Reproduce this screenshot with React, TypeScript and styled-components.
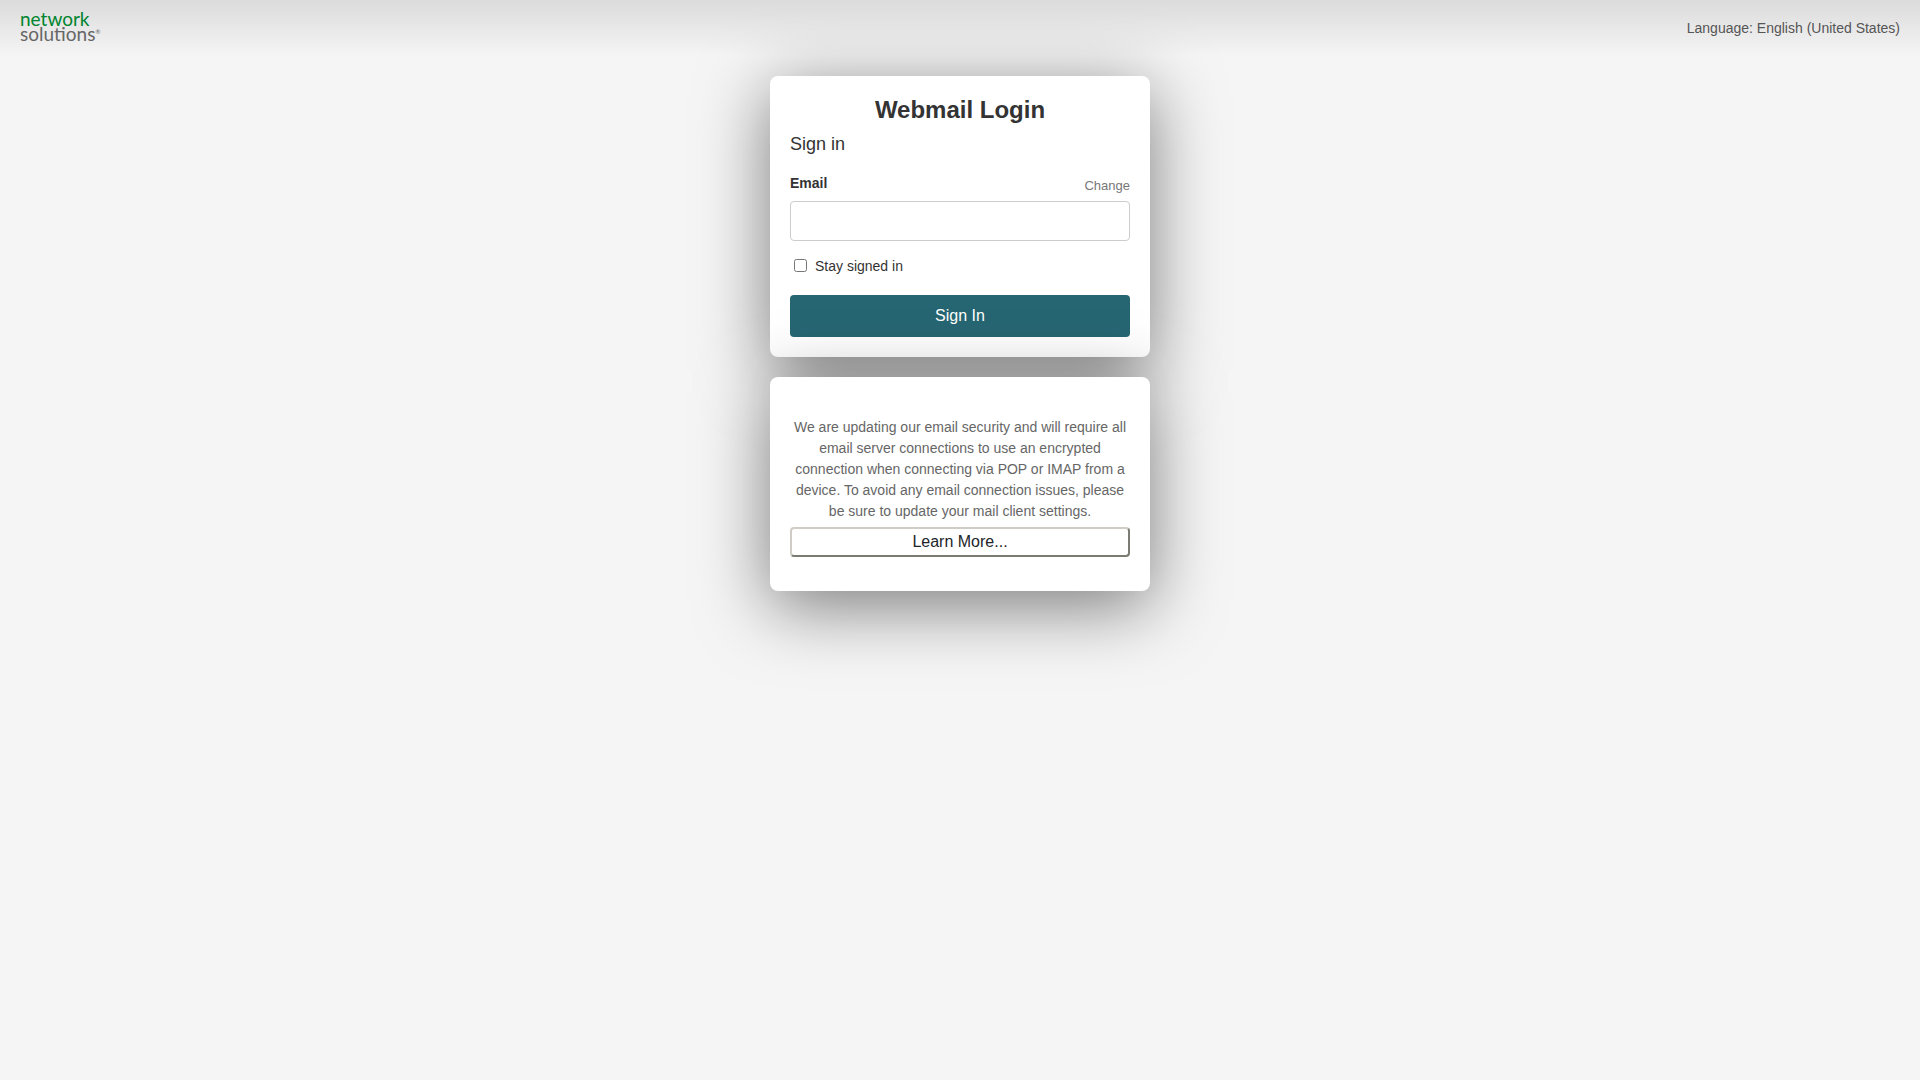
import React, { useState } from "react";
import styled, { createGlobalStyle } from "styled-components";

const GlobalStyle = createGlobalStyle`
  *, *::before, *::after { box-sizing: border-box; }
  body {
    margin: 0;
    background: #f5f5f5;
    color: #333;
    font: 14px/21px "Liberation Sans", Arial, sans-serif;
  }
`;

const Page = styled.div`
  min-height: 100vh;
`;

const Header = styled.header`
  display: flex;
  justify-content: space-between;
  align-items: center;
  height: 56px;
  padding: 0 20px;
  background: linear-gradient(#dbdbdb, #f5f5f5);
`;

const Logo = styled.a`
  display: flex;
  flex-direction: column;
  padding-bottom: 4px;
  color: #666;
  font: 19px/15px Lato, "Noto Sans", sans-serif;
  text-decoration: none;
`;

const LogoTop = styled.span`
  color: #00852f;
`;

const Registered = styled.sup`
  font-size: 6px;
  line-height: 6px;
`;

const LanguageButton = styled.button`
  padding: 0;
  border: 0;
  background: none;
  color: #555;
  font: inherit;
  cursor: pointer;
`;

const Main = styled.main`
  display: flex;
  flex-direction: column;
  gap: 20px;
  width: 100%;
  max-width: 380px;
  margin: 20px auto;
`;

const Card = styled.section`
  padding: 20px;
  border-radius: 8px;
  background: #fff;
  box-shadow: 0 15px 70px rgba(0, 0, 0, 0.5);
`;

const NoticeCard = styled(Card)`
  padding: 40px 20px 34px;
`;

const Title = styled.h1`
  margin: 0 0 8px;
  font-size: 24px;
  line-height: 28px;
  text-align: center;
`;

const Subtitle = styled.h2`
  margin: 0 0 17px;
  font-size: 18px;
  font-weight: 400;
  line-height: 24px;
`;

const FieldHead = styled.div`
  display: flex;
  justify-content: space-between;
  align-items: flex-end;
  height: 23px;
  margin-bottom: 5px;
`;

const Label = styled.label`
  align-self: flex-start;
  font-weight: 700;
`;

const ChangeLink = styled.a`
  color: #777;
  font-size: 13px;
  text-decoration: none;
`;

const TextInput = styled.input`
  display: block;
  width: 100%;
  height: 40px;
  padding: 8px 12px;
  border: 1px solid #ccc;
  border-radius: 4px;
  background: #fff;
  font: inherit;
`;

const CheckRow = styled.label`
  display: flex;
  align-items: flex-start;
  gap: 8px;
  margin: 15px 0 18px;
`;

const Checkbox = styled.input`
  width: 13px;
  height: 13px;
  margin: 3px 0 0 4px;
`;

const SubmitButton = styled.button`
  display: block;
  width: 100%;
  height: 42px;
  padding: 0 12px 2px;
  border: 0;
  border-radius: 4px;
  background: #266672;
  color: #fff;
  font: inherit;
  font-size: 16px;
  cursor: pointer;
`;

const Notice = styled.p`
  margin: 0 0 5px;
  color: #666;
  text-align: center;
`;

const LearnButton = styled.button`
  display: block;
  width: 100%;
  padding: 1px 6px;
  border: 2px solid;
  border-color: #d0ccc6 #7c7c74 #7c7c74 #d0ccc6;
  border-radius: 4px;
  background: #fff;
  color: #212529;
  font: 16px/24px "Liberation Sans", Arial, sans-serif;
  cursor: pointer;
`;

export default function App() {
  const [email, setEmail] = useState("");
  const [stay, setStay] = useState(false);
  return (
    <Page>
      <GlobalStyle />
      <Header>
        <Logo href="#">
          <LogoTop>network</LogoTop>
          <span>
            solutions<Registered>®</Registered>
          </span>
        </Logo>
        <LanguageButton type="button">Language: English (United States)</LanguageButton>
      </Header>
      <Main>
        <Card>
          <Title>Webmail Login</Title>
          <Subtitle>Sign in</Subtitle>
          <form onSubmit={(e) => e.preventDefault()}>
            <FieldHead>
              <Label htmlFor="email">Email</Label>
              <ChangeLink href="#">Change</ChangeLink>
            </FieldHead>
            <TextInput id="email" type="email" value={email} onChange={(e) => setEmail(e.target.value)} />
            <CheckRow>
              <Checkbox type="checkbox" checked={stay} onChange={(e) => setStay(e.target.checked)} />
              Stay signed in
            </CheckRow>
            <SubmitButton type="submit">Sign In</SubmitButton>
          </form>
        </Card>
        <NoticeCard>
          <Notice>
            We are updating our email security and will require all email server connections to use an encrypted
            connection when connecting via POP or IMAP from a device. To avoid any email connection issues, please be
            sure to update your mail client settings.
          </Notice>
          <LearnButton type="button">Learn More...</LearnButton>
        </NoticeCard>
      </Main>
    </Page>
  );
}
